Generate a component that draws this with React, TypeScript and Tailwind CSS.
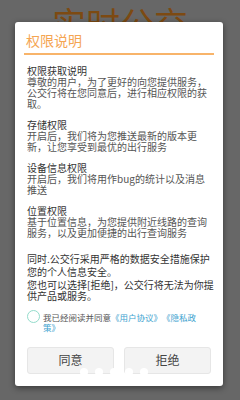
export default function App() {
  // lines are broken where the reference breaks them
  const sections = [
    {
      title: "权限获取说明",
      lines: ["尊敬的用户，为了更好的向您提供服务，", "公交行将在您同意后，进行相应权限的获", "取。"],
    },
    {
      title: "存储权限",
      lines: ["开启后，我们将为您推送最新的版本更", "新，让您享受到最优的出行服务"],
    },
    {
      title: "设备信息权限",
      lines: ["开启后，我们将用作bug的统计以及消息", "推送"],
    },
    {
      title: "位置权限",
      lines: ["基于位置信息，为您提供附近线路的查询", "服务，以及更加便捷的出行查询服务"],
    },
  ];

  return (
    <div
      className="relative w-[240px] h-[400px] overflow-hidden bg-[#676767] [text-spacing-trim:space-all]"
      style={{ fontFamily: '"Noto Sans CJK SC", "Noto Sans", sans-serif' }}
    >
      {/* page behind the dialog */}
      <div className="pt-[6px] text-center text-[34px] leading-[34px] text-[#7d4a12]">
        实时公交
      </div>

      {/* dialog */}
      <div className="absolute left-[15px] top-[22px] w-[208px] rounded-[3px] bg-white shadow-[0_2px_6px_rgba(0,0,0,0.45)]">
        <div className="px-[11px] pt-[9px] pb-[4px] text-[14px] leading-[18px] text-[#f5a552]">
          权限说明
        </div>
        <div className="mx-[9px] h-[2px] bg-[#f8b46a]" />

        <div className="px-[12px] pt-[10px] text-[10px] whitespace-nowrap">
          {sections.map((s, i) => (
            <div key={s.title} className={i > 0 ? "mt-[10px]" : ""}>
              <p className="leading-[11px] text-[#333]">{s.title}</p>
              {s.lines.map((l) => (
                <p key={l} className="leading-[11px] text-[#555]">
                  {l}
                </p>
              ))}
            </div>
          ))}

          <div className="mt-[14px] leading-[13px] text-[#333]">
            <p>同时.公交行采用严格的数据安全措施保护</p>
            <p>您的个人信息安全。</p>
          </div>
          <div className="mt-[1px] leading-[11px] text-[#333]">
            <p>您也可以选择[拒绝]，公交行将无法为你提</p>
            <p>供产品或服务。</p>
          </div>

          {/* agreement */}
          <div className="mt-[9px] flex items-start gap-[3px]">
            <span className="h-[13px] w-[13px] shrink-0 rounded-full border border-[#93dccb]" />
            <div className="mt-[1.5px] text-[8.5px] leading-[10px] text-[#555]">
              <p>
                我已经阅读并同意
                <span className="text-[#3ea3cf]">《用户协议》《隐私政</span>
              </p>
              <p className="text-[#3ea3cf]">策》</p>
            </div>
          </div>

          {/* buttons */}
          <div className="mt-[15px] pb-[12px] grid grid-cols-2 gap-[10px]">
            <button className="h-[27px] rounded-[3px] border border-[#e6e6e6] bg-[#f3f3f3] text-[12px] text-[#444]">
              同意
            </button>
            <button className="h-[27px] rounded-[3px] border border-[#e6e6e6] bg-[#f3f3f3] text-[12px] text-[#444]">
              拒绝
            </button>
          </div>
        </div>
      </div>

      {/* page indicator dots from the page below */}
      <div className="absolute left-[80px] top-[368px] flex gap-[7px]">
        <span className="h-[8px] w-[8px] rounded-full bg-white" />
        <span className="h-[8px] w-[8px] rounded-full bg-white" />
        <span className="h-[8px] w-[8px] rounded-full bg-white" />
        <span className="h-[8px] w-[8px] rounded-full bg-white" />
        <span className="h-[8px] w-[8px] rounded-full bg-white" />
      </div>
    </div>
  );
}
